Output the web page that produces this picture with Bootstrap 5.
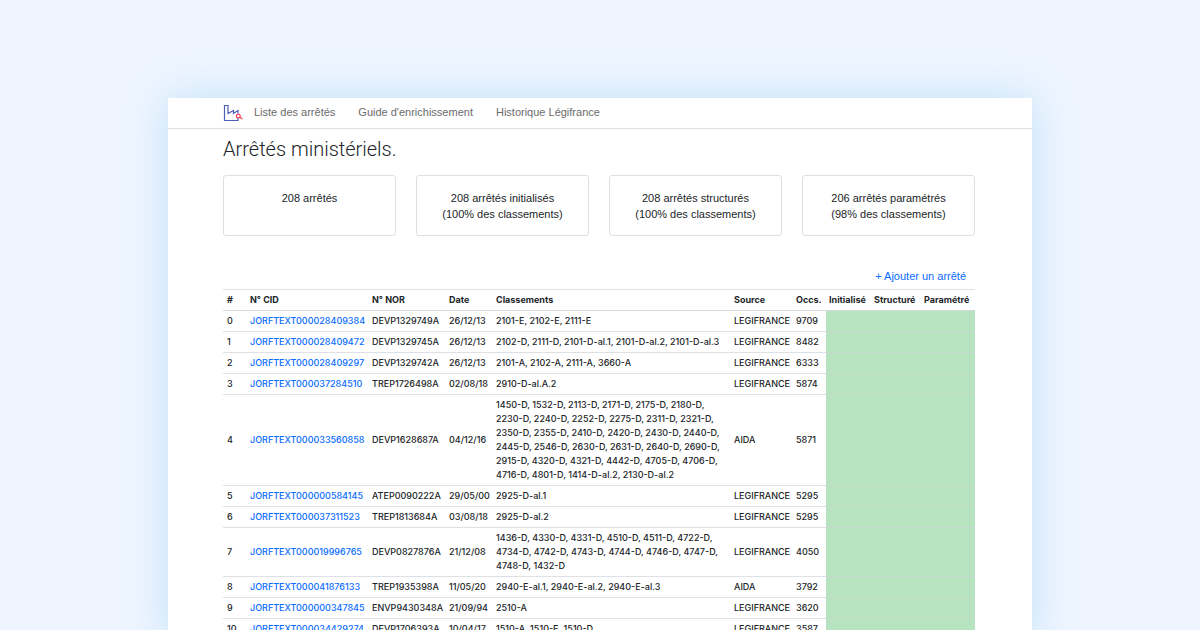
<!DOCTYPE html>
<html lang="fr">
<head>
<meta charset="utf-8">
<meta name="viewport" content="width=device-width, initial-scale=1">
<title>Arrêtés ministériels</title>
<link href="https://cdn.jsdelivr.net/npm/bootstrap@5.3.0/dist/css/bootstrap.min.css" rel="stylesheet">
<style>
  body { font-family: "Liberation Sans", Arial, sans-serif; font-size: 11px; line-height: 16px; background: #eef5ff; color: #212529; padding-top: 98px; }
  .app-window { width: 72%; box-shadow: 0 0 40px #c2e0f8; }
  .gutter { padding-left: 55px; padding-right: 57px; }
  .app-nav { height: 31px; border-bottom: 1px solid #dfe1e3; }
  .app-nav a { color: #6b6b6b; }
  .nav-links { gap: 23px; margin-left: 11px; padding-bottom: 2px; }
  .logo { width: 20px; height: 18px; }
  .page-title { font-family: Roboto, sans-serif; font-size: 20px; line-height: 26px; font-weight: 300; padding: 7px 0 13px; }
  .stats { gap: 20px; }
  .stat { flex: 1 1 0; height: 61px; padding-top: 14px; border: 1px solid #dfdfdf; border-radius: 3px; }
  a { color: #0a6cff; text-decoration: none; }
  .add-row { padding: 32px 9px 5px 0; }
  .orders { table-layout: fixed; font-family: Inter, sans-serif; font-size: 9px; line-height: 14px; white-space: nowrap; --bs-table-color: #212529; }
  .orders > :not(caption) > * > * { padding: 3px; border-top: 1px solid #dee2e6; border-bottom: 0; }
  .orders thead th { border-bottom: 1px solid #d3dade; }
  .orders td { font-weight: 450; }
  .orders th:first-child, .orders td:first-child { padding-left: 4px; }
  .orders td:nth-child(5) { white-space: normal; }
  .orders td:nth-child(n+8) { background: #b7e3c0; border-top-color: #c6d9cf; }
  .c-num { width: 24px; } .c-cid { width: 122px; } .c-nor { width: 77px; } .c-date { width: 47px; }
  .c-src { width: 62px; } .c-occ { width: 33px; } .c-ini { width: 45px; } .c-str { width: 50px; } .c-par { width: 54px; }
</style>
</head>
<body class="vh-100 overflow-hidden">
<div class="app-window bg-white mx-auto">
  <nav class="app-nav gutter d-flex align-items-center">
    <a href="#" class="d-flex" aria-label="Accueil">
      <svg class="logo" viewBox="0 0 20 18" fill="none" aria-hidden="true">
        <path d="M15 13.500V16.500H1.500V1.500H5V9.500L10.500 6.500V9.500L15 6.500V9.500" stroke="#4a5fb5" stroke-width="1.200"/>
        <circle cx="15.300" cy="12" r="1.900" stroke="#ee4058" stroke-width="1.200" fill="#fff"/>
        <path d="M16.800 13.200L19.500 15" stroke="#ee4058" stroke-width="1.200"/>
      </svg>
    </a>
    <ul class="list-unstyled d-flex mb-0 nav-links">
      <li><a href="#">Liste des arrêtés</a></li>
      <li><a href="#">Guide d'enrichissement</a></li>
      <li><a href="#">Historique Légifrance</a></li>
    </ul>
  </nav>
  <main class="gutter">
    <h1 class="page-title mb-0">Arrêtés ministériels.</h1>
    <div class="stats d-flex text-center">
      <div class="stat">208 arrêtés</div>
      <div class="stat">208 arrêtés initialisés<br>(100% des classements)</div>
      <div class="stat">208 arrêtés structurés<br>(100% des classements)</div>
      <div class="stat">206 arrêtés paramétrés<br>(98% des classements)</div>
    </div>
    <div class="add-row text-end"><a href="#">+ Ajouter un arrêté</a></div>
    <table class="table orders align-middle mb-0">
      <colgroup><col class="c-num"><col class="c-cid"><col class="c-nor"><col class="c-date"><col><col class="c-src"><col class="c-occ"><col class="c-ini"><col class="c-str"><col class="c-par"></colgroup>
      <thead><tr><th>#</th><th>N° CID</th><th>N° NOR</th><th>Date</th><th>Classements</th><th>Source</th><th>Occs.</th><th>Initialisé</th><th>Structuré</th><th>Paramétré</th></tr></thead>
      <tbody>
        <tr><td>0</td><td><a href="#">JORFTEXT000028409384</a></td><td>DEVP1329749A</td><td>26/12/13</td><td>2101-E, 2102-E, 2111-E</td><td>LEGIFRANCE</td><td>9709</td><td></td><td></td><td></td></tr>
        <tr><td>1</td><td><a href="#">JORFTEXT000028409472</a></td><td>DEVP1329745A</td><td>26/12/13</td><td>2102-D, 2111-D, 2101-D-al.1, 2101-D-al.2, 2101-D-al.3</td><td>LEGIFRANCE</td><td>8482</td><td></td><td></td><td></td></tr>
        <tr><td>2</td><td><a href="#">JORFTEXT000028409297</a></td><td>DEVP1329742A</td><td>26/12/13</td><td>2101-A, 2102-A, 2111-A, 3660-A</td><td>LEGIFRANCE</td><td>6333</td><td></td><td></td><td></td></tr>
        <tr><td>3</td><td><a href="#">JORFTEXT000037284510</a></td><td>TREP1726498A</td><td>02/08/18</td><td>2910-D-al.A.2</td><td>LEGIFRANCE</td><td>5874</td><td></td><td></td><td></td></tr>
        <tr><td>4</td><td><a href="#">JORFTEXT000033560858</a></td><td>DEVP1628687A</td><td>04/12/16</td><td>1450-D, 1532-D, 2113-D, 2171-D, 2175-D, 2180-D, 2230-D, 2240-D, 2252-D, 2275-D, 2311-D, 2321-D, 2350-D, 2355-D, 2410-D, 2420-D, 2430-D, 2440-D, 2445-D, 2546-D, 2630-D, 2631-D, 2640-D, 2690-D, 2915-D, 4320-D, 4321-D, 4442-D, 4705-D, 4706-D, 4716-D, 4801-D, 1414-D-al.2, 2130-D-al.2</td><td>AIDA</td><td>5871</td><td></td><td></td><td></td></tr>
        <tr><td>5</td><td><a href="#">JORFTEXT000000584145</a></td><td>ATEP0090222A</td><td>29/05/00</td><td>2925-D-al.1</td><td>LEGIFRANCE</td><td>5295</td><td></td><td></td><td></td></tr>
        <tr><td>6</td><td><a href="#">JORFTEXT000037311523</a></td><td>TREP1813684A</td><td>03/08/18</td><td>2925-D-al.2</td><td>LEGIFRANCE</td><td>5295</td><td></td><td></td><td></td></tr>
        <tr><td>7</td><td><a href="#">JORFTEXT000019996765</a></td><td>DEVP0827876A</td><td>21/12/08</td><td>1436-D, 4330-D, 4331-D, 4510-D, 4511-D, 4722-D, 4734-D, 4742-D, 4743-D, 4744-D, 4746-D, 4747-D, 4748-D, 1432-D</td><td>LEGIFRANCE</td><td>4050</td><td></td><td></td><td></td></tr>
        <tr><td>8</td><td><a href="#">JORFTEXT000041876133</a></td><td>TREP1935398A</td><td>11/05/20</td><td>2940-E-al.1, 2940-E-al.2, 2940-E-al.3</td><td>AIDA</td><td>3792</td><td></td><td></td><td></td></tr>
        <tr><td>9</td><td><a href="#">JORFTEXT000000347845</a></td><td>ENVP9430348A</td><td>21/09/94</td><td>2510-A</td><td>LEGIFRANCE</td><td>3620</td><td></td><td></td><td></td></tr>
        <tr><td>10</td><td><a href="#">JORFTEXT000034429274</a></td><td>DEVP1706393A</td><td>10/04/17</td><td>1510-A, 1510-E, 1510-D</td><td>LEGIFRANCE</td><td>3587</td><td></td><td></td><td></td></tr>
      </tbody>
    </table>
  </main>
</div>
<script src="https://cdn.jsdelivr.net/npm/bootstrap@5.3.0/dist/js/bootstrap.bundle.min.js"></script>
</body>
</html>
